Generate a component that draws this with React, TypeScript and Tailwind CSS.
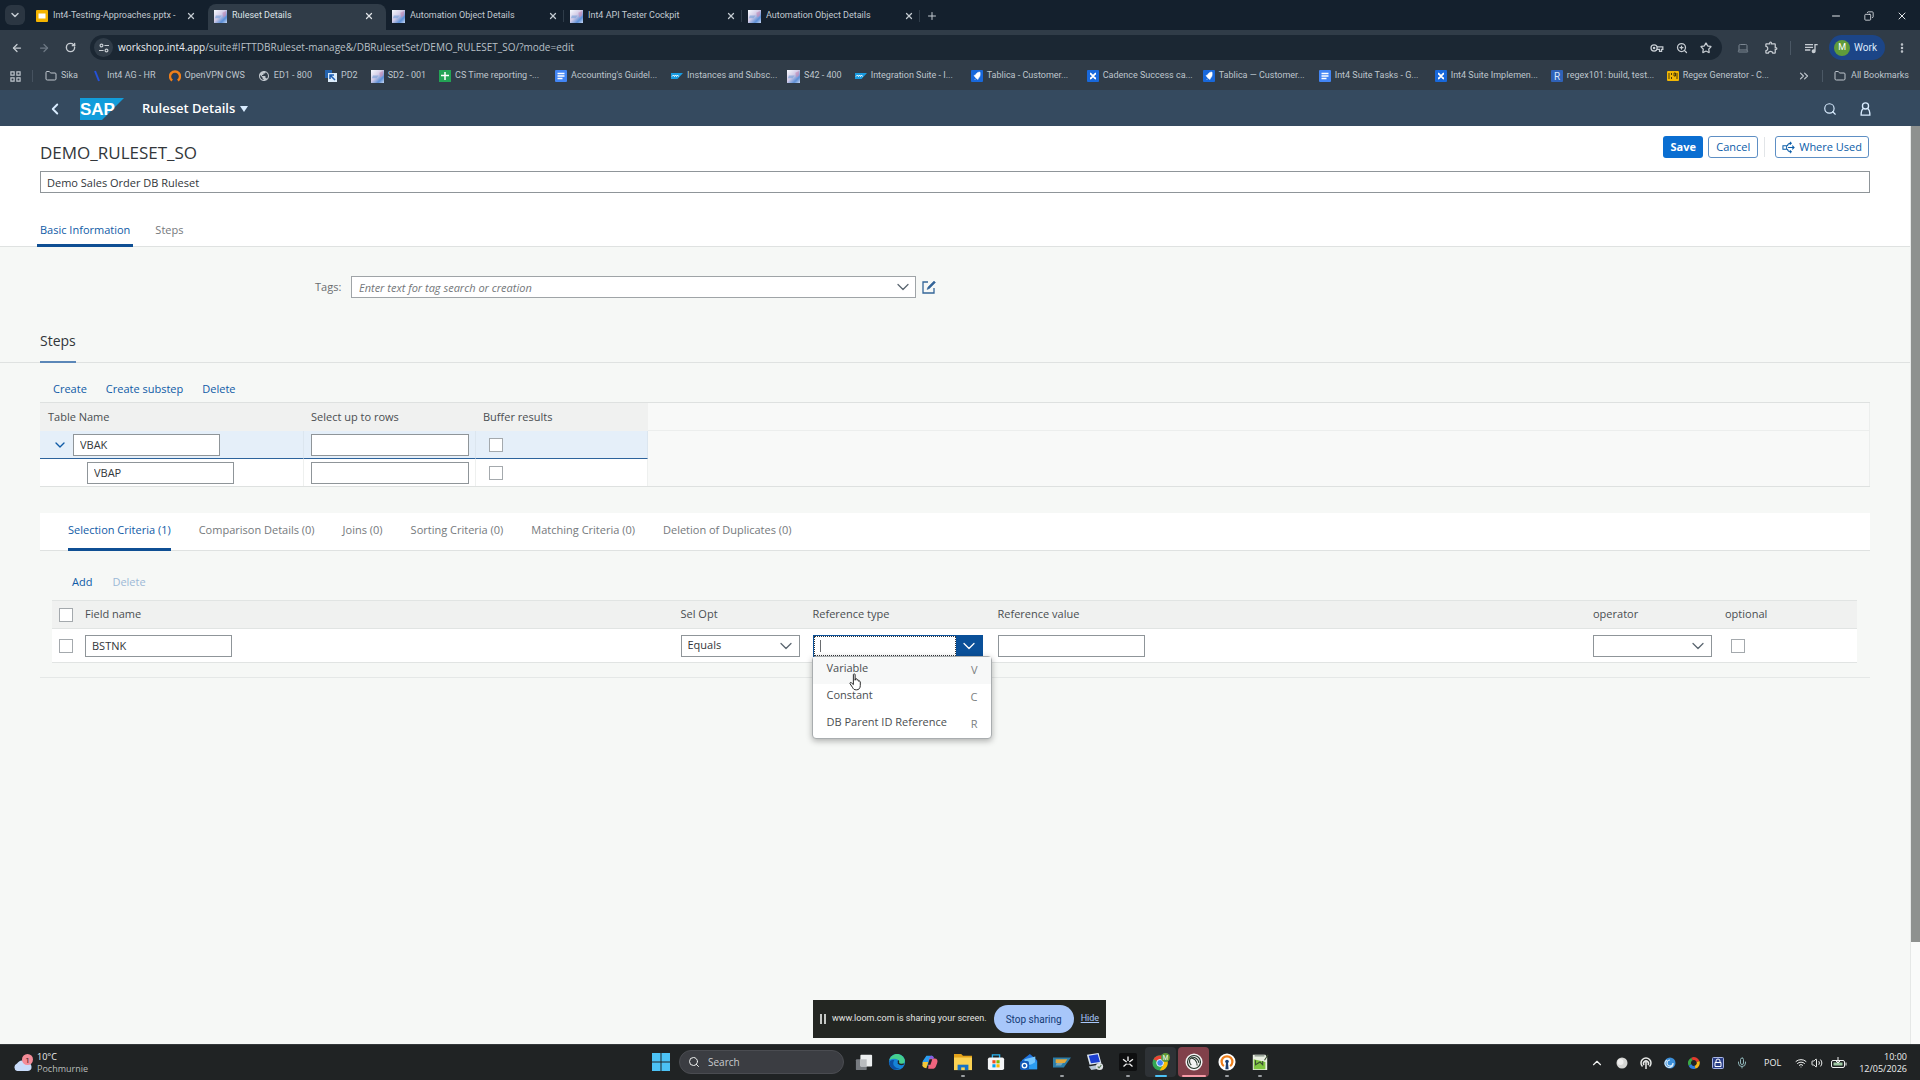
import { useState, type ReactNode } from 'react';
import {
  ArrowLeft,
  ArrowRight,
  ChevronDown,
  ChevronLeft,
  ChevronUp,
  ChevronsRight,
  Copy,
  EllipsisVertical,
  Folder,
  Laptop,
  Mic,
  Minus,
  Plus,
  RotateCw,
  Search,
  Star,
  Volume2,
  Wifi,
  X,
  ZoomIn,
} from 'lucide-react';
import { MdOutlineExtension, MdPublic, MdQueueMusic } from 'react-icons/md';

const INPUT =
  'h-[22px] rounded-none border border-[#8f9599] bg-white px-1.5 text-[11px] text-[#32363a] outline-none';
const CHECKBOX = 'block size-3.5 appearance-none border border-[#a4a9ad] bg-white';

/* ---------- Favicons ---------- */

function Int4Icon() {
  return (
    <svg viewBox="0 0 14 14" className="size-[13px] shrink-0">
      <defs>
        <linearGradient id="int4" x1="0" y1="0" x2="1" y2="1">
          <stop offset="0" stopColor="#f7fbff" />
          <stop offset="0.45" stopColor="#d3cbe6" />
          <stop offset="0.75" stopColor="#5c8fd6" />
          <stop offset="1" stopColor="#c9d8f4" />
        </linearGradient>
      </defs>
      <rect width="14" height="14" fill="url(#int4)" />
      <path d="M2 6h6l-2 3H1z" fill="#7ca3d9" opacity=".7" />
      <path d="M9 3l4-2v5l-3 2z" fill="#c88bb4" opacity=".6" />
    </svg>
  );
}

function SlidesIcon() {
  return (
    <svg viewBox="0 0 12 12" className="size-3 shrink-0">
      <rect width="12" height="12" rx="1" fill="#f5b400" />
      <rect x="2.5" y="3.5" width="7" height="5" fill="#fff" />
    </svg>
  );
}

function SlashIcon() {
  return (
    <svg viewBox="0 0 12 12" className="size-3 shrink-0">
      <path d="M4 1l4 10" stroke="#2451d8" strokeWidth="2" />
    </svg>
  );
}

function VpnIcon() {
  return (
    <svg viewBox="0 0 12 12" className="size-3 shrink-0">
      <path d="M3.2 10.6A5 5 0 1 1 8.8 10.6" fill="none" stroke="#ee7f1b" strokeWidth="2.4" />
      <circle cx="6" cy="6" r="1.5" fill="#1c3f72" />
      <path d="M5.3 6.5h1.4l.6 5H4.7z" fill="#1c3f72" />
    </svg>
  );
}

function Pd2Icon() {
  return (
    <svg viewBox="0 0 12 12" className="size-3 shrink-0">
      <rect x="0" y="0" width="7" height="8" fill="#2463ae" />
      <rect x="3" y="3" width="9" height="9" fill="#dcecfa" />
      <path d="M5 5l5 5M5 9V5h4" stroke="#1d5eb4" strokeWidth="1.5" fill="none" />
    </svg>
  );
}

function SheetsIcon() {
  return (
    <svg viewBox="0 0 12 12" className="size-3 shrink-0">
      <rect width="12" height="12" fill="#23a455" />
      <path d="M6 2v8M2 5.5h8" stroke="#fff" strokeWidth="1.5" />
    </svg>
  );
}

function DocsIcon() {
  return (
    <svg viewBox="0 0 12 12" className="size-3 shrink-0">
      <rect width="12" height="12" rx="1" fill="#4285f4" />
      <path d="M2.5 3.5h7M2.5 6h7M2.5 8.5h5" stroke="#fff" strokeWidth="1.3" />
    </svg>
  );
}

function SapMiniIcon() {
  return (
    <svg viewBox="0 0 12 12" className="size-3 shrink-0">
      <path d="M0 3h12L6.5 9H0z" fill="#1a9be0" />
      <path d="M1 6.5L2.5 5l1 1.5 1-1.5 1 1.5 1-1.5 1 1.5" stroke="#fff" fill="none" />
    </svg>
  );
}

function JiraIcon() {
  return (
    <svg viewBox="0 0 12 12" className="size-3 shrink-0">
      <rect width="12" height="12" rx="1" fill="#1868db" />
      <path d="M9 2C6.5 2 5 3.5 4.5 5L3 5.5 4 7l1.5 1.5L7 9.5 7.5 8C9 7 9.500 5 9 2zM3.500 10L5 8.500" fill="#fff" stroke="#fff" strokeWidth=".5" />
    </svg>
  );
}

function ConfluenceIcon() {
  return (
    <svg viewBox="0 0 12 12" className="size-3 shrink-0">
      <rect width="12" height="12" rx="1" fill="#1868db" />
      <path d="M3 3.5c2 0 3.5 5 6 5M9 3.5c-2 0-3.5 5-6 5" stroke="#fff" strokeWidth="1.8" fill="none" />
    </svg>
  );
}

function RegexIcon() {
  return (
    <svg viewBox="0 0 12 12" className="size-3 shrink-0">
      <rect width="12" height="12" rx="1" fill="#2f62b8" />
      <text x="6" y="9.5" textAnchor="middle" fontSize="10" fill="#dbe8fb" fontFamily="Roboto, sans-serif">R</text>
    </svg>
  );
}

function RegexGenIcon() {
  return (
    <svg viewBox="0 0 12 12" className="size-3 shrink-0">
      <rect y="1" width="12" height="10" rx="1" fill="#f2b705" />
      <path d="M2 3v6M4.5 3v2M4.5 7v2M7 3h1.5v3H7zM10 3v6" stroke="#4a3a08" fill="none" />
    </svg>
  );
}

const browserTabs = [
  { title: 'Int4-Testing-Approaches.pptx -', icon: <SlidesIcon />, active: false },
  { title: 'Ruleset Details', icon: <Int4Icon />, active: true },
  { title: 'Automation Object Details', icon: <Int4Icon />, active: false },
  { title: 'Int4 API Tester Cockpit', icon: <Int4Icon />, active: false },
  { title: 'Automation Object Details', icon: <Int4Icon />, active: false },
];

const bookmarks: { label: string; icon: ReactNode; long?: boolean }[] = [
  { label: 'Sika', icon: <Folder className="size-3 shrink-0" /> },
  { label: 'Int4 AG - HR', icon: <SlashIcon /> },
  { label: 'OpenVPN CWS', icon: <VpnIcon /> },
  { label: 'ED1 - 800', icon: <MdPublic className="size-3 shrink-0" /> },
  { label: 'PD2', icon: <Pd2Icon /> },
  { label: 'SD2 - 001', icon: <Int4Icon /> },
  { label: 'CS Time reporting -...', icon: <SheetsIcon />, long: true },
  { label: "Accounting's Guidel...", icon: <DocsIcon />, long: true },
  { label: 'Instances and Subsc...', icon: <SapMiniIcon />, long: true },
  { label: 'S42 - 400', icon: <Int4Icon /> },
  { label: 'Integration Suite - I...', icon: <SapMiniIcon />, long: true },
  { label: 'Tablica - Customer...', icon: <JiraIcon />, long: true },
  { label: 'Cadence Success ca...', icon: <ConfluenceIcon />, long: true },
  { label: 'Tablica — Customer...', icon: <JiraIcon />, long: true },
  { label: 'Int4 Suite Tasks - G...', icon: <DocsIcon />, long: true },
  { label: 'Int4 Suite Implemen...', icon: <ConfluenceIcon />, long: true },
  { label: 'regex101: build, test...', icon: <RegexIcon />, long: true },
  { label: 'Regex Generator - C...', icon: <RegexGenIcon />, long: true },
];

/* ---------- Browser chrome ---------- */

function TabStrip() {
  return (
    <div className="flex h-[30px] items-end bg-[#14202d] pl-[5px] text-[9px] text-[#c3cad1]">
      <button aria-label="Search tabs" className="mb-[5px] flex size-5 items-center justify-center rounded-md bg-[#2b3642]">
        <ChevronDown className="size-3" strokeWidth={3} />
      </button>
      <div className="ml-[5px] flex">
        {browserTabs.map((tab, i) => (
          <div
            key={i}
            className={`flex h-[26px] w-[178px] items-center gap-[5px] pr-3 pb-0.5 pl-1.5 ${
              tab.active ? 'rounded-t-lg bg-[#303c48] text-[#dfe3e7]' : ''
            }`}
          >
            {tab.icon}
            <span className="flex-1 truncate">{tab.title}</span>
            <button aria-label="Close tab">
              <X className="size-2.5" strokeWidth={3} />
            </button>
            {i > 1 && <span className="-mr-3 h-3 w-px bg-[#2f3c49]" />}
          </div>
        ))}
      </div>
      <button aria-label="New tab" className="mb-2 ml-1.5">
        <Plus className="size-3" />
      </button>
      <div className="mr-3 mb-2 ml-auto flex items-center gap-[22px] text-[#e2e6ea]">
        <button aria-label="Minimize"><Minus className="size-3" /></button>
        <button aria-label="Restore"><Copy className="size-2.5 -scale-x-100" /></button>
        <button aria-label="Close"><X className="size-3" /></button>
      </div>
    </div>
  );
}

function KeyIcon() {
  return (
    <svg viewBox="0 0 16 12" className="h-2.5 w-3.5" fill="none" stroke="currentColor" strokeWidth="1.5">
      <circle cx="4.5" cy="6" r="3.7" />
      <circle cx="4.5" cy="6" r=".8" fill="currentColor" />
      <path d="M8 4.5h7v3h-1.5V10H11V7.5H8" />
    </svg>
  );
}

function TuneIcon() {
  return (
    <svg viewBox="0 0 12 12" className="size-2.5" fill="none" stroke="currentColor" strokeWidth="1.4">
      <circle cx="3" cy="3" r="1.7" />
      <path d="M6.5 3H12M0 9h5.5" />
      <circle cx="9" cy="9" r="1.7" />
    </svg>
  );
}

function AddressBar() {
  return (
    <div className="flex h-[34px] items-center bg-[#303c48] pt-px pr-3 pl-[11px] text-[#c6ccd2]">
      <button aria-label="Back"><ArrowLeft className="size-3" strokeWidth={2.5} /></button>
      <button aria-label="Forward" className="ml-[15px] text-[#6c7783]"><ArrowRight className="size-3" strokeWidth={2.5} /></button>
      <button aria-label="Reload" className="ml-[15px]"><RotateCw className="size-[11px]" strokeWidth={3} /></button>
      <div className="ml-3.5 flex h-[25px] flex-1 items-center rounded-full bg-[#1b2733] pr-2.5 pl-1">
        <span className="flex size-[19px] items-center justify-center rounded-full bg-[#303c48]"><TuneIcon /></span>
        <span className="ml-[5px] flex-1 font-['Open_Sans',sans-serif] text-[10px] text-[#b9c0c7]">
          <span className="text-[#eceff1]">workshop.int4.app</span>
          /suite#IFTTDBRuleset-manage&amp;/DBRulesetSet/DEMO_RULESET_SO/?mode=edit
        </span>
        <span className="flex items-center gap-3">
          <KeyIcon />
          <ZoomIn className="size-3" strokeWidth={2.5} />
          <Star className="size-3" strokeWidth={2.5} />
        </span>
      </div>
      <Laptop className="ml-[15px] size-3 text-[#7b8691]" />
      <MdOutlineExtension className="ml-[15px] size-[15px]" />
      <span className="ml-[11px] h-3.5 w-px bg-[#4b5865]" />
      <MdQueueMusic className="ml-3 size-4" />
      <button className="ml-2.5 flex h-[25px] items-center gap-1 rounded-full bg-[#1c4587] pr-2 pl-[5px] text-[10px] text-[#dfeafd]">
        <span className="flex size-4 items-center justify-center rounded-full bg-[#5f9b3a] text-[9px] text-white">M</span>
        Work
      </button>
      <EllipsisVertical className="ml-[11px] size-3" strokeWidth={3} />
    </div>
  );
}

function BookmarksBar() {
  return (
    <div className="flex h-[26px] items-center bg-[#303c48] pr-[11px] pb-0.5 pl-2.5 text-[9px] text-[#bfc6cd]">
      <svg viewBox="0 0 12 12" className="size-[11px]" fill="none" stroke="currentColor" strokeWidth="1.3">
        <path d="M1 1h3.5v3.5H1zM7.5 1H11v3.5H7.5zM1 7.5h3.5V11H1zM7.5 7.5H11V11H7.5z" />
      </svg>
      <span className="mr-3 ml-[11px] h-3 w-px bg-[#46525f]" />
      <div className="flex gap-[13px]">
        {bookmarks.map((b, i) => (
          <a
            key={i}
            href="#"
            className={`flex items-center gap-1 whitespace-nowrap ${b.long ? 'w-[103px]' : ''}`}
          >
            {b.icon}
            {b.label}
          </a>
        ))}
      </div>
      <ChevronsRight className="ml-auto size-3.5" />
      <span className="mx-[11px] h-3 w-px bg-[#4b5865]" />
      <a href="#" className="flex items-center gap-[5px]">
        <Folder className="size-3" />
        All Bookmarks
      </a>
    </div>
  );
}

/* ---------- SAP shell ---------- */

function ShellHeader() {
  return (
    <header className="flex h-9 items-center bg-[#354a5f] pt-px pr-12 pl-[46px] text-white">
      <button aria-label="Back"><ChevronLeft className="size-[18px] text-[#d9ecff]" strokeWidth={2.5} /></button>
      <svg viewBox="0 0 44 22" className="ml-4 h-[22px] w-11">
        <path d="M0 0h44L22 22H0z" fill="#129ddb" />
        <text x="0" y="17" fontSize="17" fontWeight="700" fill="#fff" fontFamily="'Liberation Sans', sans-serif">SAP</text>
      </svg>
      <button className="ml-[18px] flex items-center gap-[5px] text-[13px] font-semibold">
        Ruleset Details
        <svg viewBox="0 0 8 6" className="h-1.5 w-2"><path d="M0 0h8L4 6z" fill="#d9ecff" /></svg>
      </button>
      <button aria-label="Search" className="ml-auto text-[#d9ecff]"><Search className="size-3.5" /></button>
      <button aria-label="User" className="ml-[22px] text-[#d9ecff]">
        <svg viewBox="0 0 14 16" className="h-3.5 w-[13px]" fill="none" stroke="currentColor" strokeWidth="1.5">
          <circle cx="7" cy="4.5" r="3.5" />
          <path d="M4.5 7.5C2.5 8.5 2 10 2 15h10c0-5-.5-6.5-2.5-7.5" />
        </svg>
      </button>
    </header>
  );
}

function WhereUsedIcon() {
  return (
    <svg viewBox="0 0 14 14" className="size-[13px]" fill="none" stroke="currentColor" strokeWidth="1.1">
      <path d="M1 5h4v4H1zM6.5 7H13M11 5l2 2-2 2M6 5.5c0-2 1.5-3 4-3M8.500 1L10 2.500 8.500 4M6 8.500c0 2 1.500 3 4 3M8.500 10l1.500 1.500L8.500 13" />
    </svg>
  );
}

function ObjectHeader() {
  return (
    <div className="border-b border-[#dfe2e1] bg-white px-10 pt-2.5">
      <div className="flex h-[35px] items-start">
        <h1 className="mt-[5px] text-[17px] leading-6 text-[#32363a]">DEMO_RULESET_SO</h1>
        <div className="mr-px ml-auto flex items-center text-[11px] text-[#0a5ca8]">
          <button className="h-[22px] w-10 rounded-[3px] bg-[#0a6ed1] font-bold text-white">Save</button>
          <button className="ml-[5px] h-[22px] w-[50px] rounded-[3px] border border-[#5e8fc4]">Cancel</button>
          <span className="ml-1.5 h-5 w-px bg-[#e2e5e8]" />
          <button className="ml-2.5 flex h-[22px] items-center gap-1 rounded-[3px] border border-[#5e8fc4] px-1.5">
            <WhereUsedIcon />
            Where Used
          </button>
        </div>
      </div>
      <input aria-label="Description" defaultValue="Demo Sales Order DB Ruleset" className={`${INPUT} block w-full`} />
      <nav className="mt-5 -mb-px -ml-[3px] flex h-[34px] gap-[19px] text-[11px]">
        <a href="#basic" className="border-b-[3px] border-[#0f4f94] px-[3px] pt-[9px] text-[#0f5ba6]">Basic Information</a>
        <a href="#steps" className="px-[3px] pt-[9px] text-[#75797c]">Steps</a>
      </nav>
    </div>
  );
}

function TagsRow() {
  return (
    <div id="basic" className="flex items-center pt-[29px] pl-[315px]">
      <label htmlFor="tags" className="w-9 text-[11px] text-[#6a6d70]">Tags:</label>
      <div className="flex h-[22px] w-[565px] items-center border border-[#9fa4a7] bg-white">
        <input
          id="tags"
          placeholder="Enter text for tag search or creation"
          className="h-full min-w-0 flex-1 px-[7px] text-[11px] outline-none placeholder:text-[#74777a] placeholder:italic"
        />
        <button aria-label="Open tags" className="mr-0.5"><ChevronDown className="size-5 text-[#5a6670]" strokeWidth={1.5} /></button>
      </div>
      <button aria-label="Edit tags" className="ml-1.5 text-[#346598]">
        <svg viewBox="0 0 14 14" className="size-3.5" fill="none" stroke="currentColor" strokeWidth="1.3">
          <path d="M6 2H1v11h11V8" />
          <path d="M5 9.5L6 7l6-6 1.5 1.5-6 6z" fill="currentColor" strokeWidth=".5" />
        </svg>
      </button>
    </div>
  );
}

const steps = [
  { name: 'VBAK', level: 0 },
  { name: 'VBAP', level: 1 },
];

function StepsTable() {
  return (
    <div className="flex border-y border-[#dee1e0]">
      <table className="w-[608px] table-fixed border-separate border-spacing-0 text-left text-[11px]">
        <colgroup>
          <col className="w-[264px]" />
          <col className="w-[172px]" />
          <col />
        </colgroup>
        <thead>
          <tr className="h-7 bg-[#f0f1f0] text-[#4a4e51]">
            <th className="p-0 pl-2 font-normal">Table Name</th>
            <th className="p-0 pl-[7px] font-normal">Select up to rows</th>
            <th className="p-0 pl-[7px] font-normal">Buffer results</th>
          </tr>
        </thead>
        <tbody>
          {steps.map((step) => {
            const selected = step.level === 0;
            const cell = selected
              ? 'h-7 border-r border-b border-r-[#dce6ef] border-b-[#2d639c] bg-[#e5eff9] p-0'
              : 'h-[27px] border-r border-[#eef0ef] bg-white p-0';
            return (
              <tr key={step.name}>
                <td className={cell}>
                  <div className={`flex items-center ${selected ? 'pl-3' : 'pl-[47px]'}`}>
                    {selected && (
                      <button aria-label="Collapse VBAK" className="mr-[5px]">
                        <ChevronDown className="size-4 text-[#0f5ba6]" />
                      </button>
                    )}
                    <input aria-label="Table name" defaultValue={step.name} className={`${INPUT} w-[147px]`} />
                  </div>
                </td>
                <td className={cell}>
                  <input aria-label="Select up to rows" className={`${INPUT} ml-[7px] block w-[158px]`} />
                </td>
                <td className={cell}>
                  <input type="checkbox" aria-label="Buffer results" className={`${CHECKBOX} ml-[13px]`} />
                </td>
              </tr>
            );
          })}
        </tbody>
      </table>
      <div className="flex-1 border-r border-[#eceeed] bg-[#f8f9f8]">
        <div className="h-7 border-b border-[#eceeed]" />
      </div>
    </div>
  );
}

const detailTabs = [
  'Selection Criteria (1)',
  'Comparison Details (0)',
  'Joins (0)',
  'Sorting Criteria (0)',
  'Matching Criteria (0)',
  'Deletion of Duplicates (0)',
];

const referenceTypes = [
  { key: 'V', label: 'Variable' },
  { key: 'C', label: 'Constant' },
  { key: 'R', label: 'DB Parent ID Reference' },
];

function HandCursor() {
  return (
    <svg viewBox="0 0 16 20" className="pointer-events-none absolute top-4 left-9 h-[18px] w-3.5">
      <path
        d="M5 1.5c0-1 2-1 2 0V8l.3-1.5c.5-.7 1.8-.4 1.900.5V8c.5-.8 1.8-.5 1.900.4v.8c.6-.6 1.8-.2 1.8.8V14c0 3-1.500 5-4.500 5-2.500 0-3.500-1-4.500-3L1.200 12c-.6-1.200.8-2 1.700-1L5 13z"
        fill="#fff"
        stroke="#222"
        strokeWidth="1.1"
      />
    </svg>
  );
}

function ReferenceTypeCombo() {
  const [value, setValue] = useState('');
  const [open, setOpen] = useState(true);

  return (
    <div className="relative w-[170px]">
      <div className="flex h-[22px] border border-[#0a5099]">
        <div className="flex flex-1 items-center border border-dotted border-[#32363a] bg-white pl-[5px]">
          <span className="h-3 w-px bg-[#6a6d70]" />
          <input
            aria-label="Reference type"
            value={value}
            onChange={(e) => setValue(e.target.value)}
            className="h-full w-full min-w-0 text-[11px] outline-none"
          />
        </div>
        <button
          aria-label="Show reference types"
          onClick={() => setOpen(!open)}
          className="flex w-[26px] items-center justify-center bg-[#0a5099]"
        >
          <ChevronDown className="size-5 text-white" strokeWidth={1.5} />
        </button>
      </div>
      {open && (
        <ul
          role="listbox"
          className="absolute top-[21px] -left-px z-10 w-[180px] rounded-sm border border-[#a9adaf] bg-white shadow-[0_2px_6px_rgba(0,0,0,0.3)]"
        >
          {referenceTypes.map((t, i) => (
            <li
              key={t.key}
              role="option"
              aria-selected={i === 0}
              onClick={() => {
                setValue(t.label);
                setOpen(false);
              }}
              className={`flex h-[27px] items-center justify-between pr-[13px] pl-3.5 text-[#4a4e51] ${i === 0 ? 'bg-[#f7f8f8]' : ''}`}
            >
              <span className="pb-1">{t.label}</span>
              <span className="text-[#7b7f82]">{t.key}</span>
            </li>
          ))}
          <HandCursor />
        </ul>
      )}
    </div>
  );
}

function SelectBox({ label, options }: { label: string; options: string[] }) {
  return (
    <div className="relative w-[119px]">
      <select aria-label={label} className={`${INPUT} block w-full appearance-none`}>
        {options.map((o) => (
          <option key={o}>{o}</option>
        ))}
      </select>
      <ChevronDown className="pointer-events-none absolute top-px right-1 size-5 text-[#5a6670]" strokeWidth={1.5} />
    </div>
  );
}

function CriteriaTable() {
  const td = 'border-b border-[#e1e4e3] bg-white p-0';
  const th = 'border-y border-[#e1e4e3] p-0 font-normal';
  return (
    <table className="w-full table-fixed border-separate border-spacing-0 text-left text-[11px]">
      <colgroup>
        <col className="w-[33px]" />
        <col />
        <col className="w-[132px]" />
        <col className="w-[185px]" />
        <col />
        <col className="w-[132px]" />
        <col className="w-[132px]" />
      </colgroup>
      <thead>
        <tr className="h-[29px] bg-[#f0f1f0] text-[#4a4e51]">
          <th className={`${th} pl-[7px]`}><input type="checkbox" aria-label="Select all" className={CHECKBOX} /></th>
          <th className={th}>Field name</th>
          <th className={th}>Sel Opt</th>
          <th className={th}>Reference type</th>
          <th className={th}>Reference value</th>
          <th className={th}>operator</th>
          <th className={th}>optional</th>
        </tr>
      </thead>
      <tbody>
        <tr className="h-[34px]">
          <td className={`${td} pl-[7px]`}><input type="checkbox" aria-label="Select row" className={CHECKBOX} /></td>
          <td className={td}><input aria-label="Field name" defaultValue="BSTNK" className={`${INPUT} block w-[147px]`} /></td>
          <td className={td}><SelectBox label="Sel Opt" options={['Equals', 'Between']} /></td>
          <td className={td}><ReferenceTypeCombo /></td>
          <td className={td}><input aria-label="Reference value" className={`${INPUT} block w-[147px]`} /></td>
          <td className={td}><SelectBox label="operator" options={['', 'AND', 'OR']} /></td>
          <td className={td}><input type="checkbox" aria-label="optional" className={`${CHECKBOX} ml-1.5`} /></td>
        </tr>
      </tbody>
    </table>
  );
}

function RulesetPage() {
  return (
    <main className="min-w-0 flex-1 bg-[#f6f8f6]">
      <ObjectHeader />
      <TagsRow />
      <section id="steps">
        <div className="mt-[33px] flex border-b border-[#dfe2e1] pl-10">
          <h2 className="-mb-px border-b-2 border-[#5b87b8] pb-2.5 text-[14px] leading-5 text-[#32363a]">Steps</h2>
        </div>
        <div className="px-10">
          <div className="flex h-[39px] items-end gap-[19px] pb-[5px] pl-[13px] text-[11px] leading-4 text-[#0f5ba6]">
            <button>Create</button>
            <button>Create substep</button>
            <button>Delete</button>
          </div>
          <StepsTable />
          <div className="mt-[26px] flex h-[38px] gap-7 border-b border-[#dfe2e1] bg-white pl-7 text-[11px] text-[#75797c]">
            {detailTabs.map((tab, i) => (
              <button
                key={tab}
                className={`-mb-px border-b-[3px] ${i === 0 ? 'border-[#0f4f94] text-[#0f5ba6]' : 'border-transparent'}`}
              >
                {tab}
              </button>
            ))}
          </div>
          <div className="border-b border-[#e5e8e7] pr-[13px] pb-3.5 pl-3">
            <div className="flex h-[49px] items-end gap-5 pb-2.5 pl-5 text-[11px] leading-4">
              <button className="text-[#0f5ba6]">Add</button>
              <button disabled className="text-[#9cb8d6]">Delete</button>
            </div>
            <CriteriaTable />
          </div>
        </div>
      </section>
    </main>
  );
}

function SharingBar() {
  return (
    <div className="absolute bottom-[42px] left-[813px] flex h-[38px] items-center bg-[#232622] px-[7px] font-['Roboto',sans-serif] text-[9px] text-[#e3e5e3]">
      <span className="flex gap-0.5">
        <span className="h-2.5 w-0.5 bg-[#c5c8c5]" />
        <span className="h-2.5 w-0.5 bg-[#c5c8c5]" />
      </span>
      <span className="ml-1.5">www.loom.com is sharing your screen.</span>
      <button className="ml-[7px] h-7 w-20 rounded-full bg-[#a8c7fa] text-[10px] text-[#123a75]">Stop sharing</button>
      <a href="#" className="ml-[7px] text-[#a8c7fa] underline">Hide</a>
    </div>
  );
}

/* ---------- Windows taskbar ---------- */

const apps: { name: string; state?: 'open' | 'active' | 'alert'; icon: ReactNode }[] = [
  {
    name: 'Task view',
    icon: (
      <>
        <rect x="1" y="7" width="12" height="12" rx="1" fill="#777b80" />
        <rect x="6" y="2" width="13" height="13" rx="1" fill="#eceeef" />
        <rect x="6" y="7" width="7" height="8" fill="#b9bcbf" />
      </>
    ),
  },
  {
    name: 'Edge',
    icon: (
      <>
        <circle cx="10" cy="10" r="9" fill="#1683d8" />
        <path d="M1.5 8C3 2 10-1 15.5 3c4 3 4.5 8.5 0 9.5-3 .6-5-1-3.5-3 .5-3-6-4.5-10.5-1.5z" fill="#45cf8e" />
        <path d="M7 8c-3 4 0 9 6 9-6 4-12-1-11.5-7C3 8 5 7.5 7 8z" fill="#0c4fa3" />
        <path d="M11 8.5c1.5 1 .5 2 .5 3 2 2 5 1 6 .5" fill="none" stroke="#202324" strokeWidth="1.5" />
      </>
    ),
  },
  {
    name: 'Copilot',
    icon: (
      <>
        <path d="M6 3h6c2 0 2 2 1.5 3.5L11 14H5c-3 0-4-2-3-5z" fill="#2b9df0" />
        <path d="M9 6h6c3 0 4 2 3 5l-1.5 4c-.7 2-2 2.5-4 2.5H8z" fill="#f0647e" />
        <path d="M2 10h6l-2 7c-2 0-4-1-4.5-3z" fill="#f3c637" />
        <path d="M11 3c3 0 3 3 4.5 3H9z" fill="#8e57e0" />
        <path d="M9.5 7h3l-2 6h-3z" fill="#202324" />
      </>
    ),
  },
  {
    name: 'Explorer',
    state: 'open',
    icon: (
      <>
        <path d="M0 1h8l2 2h10v16H0z" fill="#e3a21a" />
        <path d="M0 5h20v14H0z" fill="#fbd253" />
        <path d="M4 13h12v6H4z" fill="#1672c4" />
        <path d="M8 16h4v3H8z" fill="#fbd253" />
      </>
    ),
  },
  {
    name: 'Store',
    icon: (
      <>
        <path d="M6 6V2h8v4" stroke="#27b3f0" strokeWidth="1.5" fill="none" />
        <rect x="1" y="5" width="18" height="14" rx="2" fill="#f4f5f7" />
        <rect x="6" y="8" width="3.5" height="3.5" fill="#f25022" />
        <rect x="10.5" y="8" width="3.5" height="3.5" fill="#7fba00" />
        <rect x="6" y="12.5" width="3.5" height="3.5" fill="#00a4ef" />
        <rect x="10.5" y="12.5" width="3.5" height="3.5" fill="#ffb900" />
      </>
    ),
  },
  {
    name: 'Outlook',
    icon: (
      <>
        <path d="M2 8l9-7 8 7v10H4z" fill="#1f73dd" />
        <path d="M5 7l12-3v9H5z" fill="#73c6ff" />
        <path d="M4 18l15-9v9z" fill="#2b9cf2" />
        <rect x="0" y="9" width="10" height="10" rx="2" fill="#1459b8" />
        <circle cx="5" cy="14" r="2.5" fill="none" stroke="#fff" strokeWidth="1.5" />
      </>
    ),
  },
  {
    name: 'SAP Logon',
    state: 'open',
    icon: (
      <>
        <path d="M0 5h20l-8 11H0z" fill="#2c7da8" />
        <path d="M3 7h13l-3 4H3z" fill="#e1a73c" />
        <path d="M4 11h7l-2 3H3z" fill="#7ba7b8" />
      </>
    ),
  },
  {
    name: 'Remote Desktop',
    icon: (
      <>
        <path d="M1 2l13-2 3 11-13 2z" fill="#dce6f2" />
        <path d="M3 3l10-1.500L15.500 10l-10 1.500z" fill="#1c3fd0" />
        <path d="M3 15l11-2 3 4-11 2z" fill="#b9c7d6" />
        <circle cx="15" cy="15" r="4" fill="#dfe3e6" />
        <path d="M13 15l1.5 1.5 2.5-3" stroke="#5b7c5b" strokeWidth="1.2" fill="none" />
      </>
    ),
  },
  {
    name: 'Shortcuts',
    state: 'open',
    icon: (
      <>
        <rect width="20" height="20" rx="2" fill="#0e0f10" />
        <path d="M10 4v5M4.5 7l4 3M15.5 7l-4 3M5 15l3.5-3M15 15l-3.5-3M10 12v1" stroke="#f2f2f2" strokeWidth="1.5" />
      </>
    ),
  },
  {
    name: 'Chrome',
    state: 'active',
    icon: (
      <>
        <circle cx="9" cy="11" r="8.5" fill="#34a853" />
        <path d="M1.6 7A8.5 8.5 0 0 1 16.4 7H9a4 4 0 0 0-3.5 2z" fill="#ea4335" />
        <path d="M16.4 7A8.5 8.5 0 0 1 8.5 19.5L12.5 13A4 4 0 0 0 9 7z" fill="#fbbc05" />
        <circle cx="9" cy="11" r="3.8" fill="#4285f4" stroke="#fff" />
        <circle cx="15" cy="5" r="5" fill="#5f9b3a" />
        <text x="15" y="7.5" textAnchor="middle" fontSize="7" fill="#fff" fontFamily="Roboto, sans-serif">M</text>
      </>
    ),
  },
  {
    name: 'Loom',
    state: 'alert',
    icon: (
      <>
        <circle cx="10" cy="10" r="9.5" fill="#f4f4f4" />
        <circle cx="10" cy="10" r="7.2" fill="none" stroke="#25352a" strokeWidth="1.3" />
        <path d="M6 5.500c4 0 7.500 3 7.500 8.500M6 5.500c-1.500 3-1 6 1 8M7 5c4-1 8 2 8.500 6" stroke="#25352a" strokeWidth="1.200" fill="none" />
      </>
    ),
  },
  {
    name: 'OpenVPN',
    state: 'open',
    icon: (
      <>
        <circle cx="10" cy="10" r="9.5" fill="#fff" />
        <path d="M6.5 14.5a6 6 0 1 1 7 0" fill="none" stroke="#ee7f1b" strokeWidth="2.5" />
        <circle cx="10" cy="9.5" r="2" fill="#1c3f72" />
        <path d="M9 10h2l.8 8H8.2z" fill="#1c3f72" />
      </>
    ),
  },
  {
    name: 'Notepad++',
    state: 'open',
    icon: (
      <>
        <path d="M2 2h14l2 3v14H2z" fill="#e9efe2" />
        <path d="M3 7l13 3v8H3z" fill="#7fc641" />
        <path d="M4 2h11v2H4z" fill="#9aa59a" />
        <path d="M5 8v5l5-3 3 3V9M15 8l4-6" stroke="#3c4f33" strokeWidth="1.2" fill="none" />
      </>
    ),
  },
];

function Taskbar() {
  return (
    <footer className="grid h-9 grid-cols-[1fr_auto_1fr] items-center border-t border-[#34383a] bg-[#202324] font-['Open_Sans',sans-serif] text-[9px] text-[#eef0ef]">
      <button className="flex items-center gap-1 pl-[13px] text-left leading-3">
        <svg viewBox="0 0 20 18" className="h-[18px] w-5">
          <path d="M4 17a4 4 0 0 1 0-7.5A6 6 0 0 1 14 9a4 4 0 0 1 1 8z" fill="#c9dcfa" />
          <circle cx="14.5" cy="5.5" r="5.5" fill="#f48c98" />
          <text x="14.5" y="8.5" textAnchor="middle" fontSize="8" fill="#30181b" fontFamily="Roboto, sans-serif">1</text>
        </svg>
        <span>
          10°C<br />
          <span className="text-[#b9bdbb]">Pochmurnie</span>
        </span>
      </button>
      <div className="flex items-center pb-px pl-2">
        <button aria-label="Start">
          <svg viewBox="0 0 18 18" className="size-[18px]" fill="#4cc2f5">
            <path d="M0 0h8.5v8.5H0zM9.5 0H18v8.5H9.5zM0 9.5h8.5V18H0zM9.5 9.5H18V18H9.5z" />
          </svg>
        </button>
        <label className="ml-[9px] flex h-6 w-[165px] items-center gap-2 rounded-full border border-[#4a4c51] bg-[#3b3d42] pl-2">
          <Search className="size-3" />
          <input aria-label="Search" placeholder="Search" className="w-24 text-[10px] outline-none placeholder:text-[#c9cbce]" />
        </label>
        <div className="ml-[3px] flex">
          {apps.map((app) => (
            <button
              key={app.name}
              aria-label={app.name}
              className={`mx-px flex h-[30px] w-[31px] flex-col items-center rounded-sm pt-1.5 ${
                app.state === 'alert' ? 'bg-[#81404a]' : app.state === 'active' ? 'bg-[#2e3236]' : ''
              }`}
            >
              <svg viewBox="0 0 20 20" className="size-[18px]">{app.icon}</svg>
              {app.state === 'open' && <span className="mt-1 h-0.5 w-1 rounded-full bg-[#9a9ea1]" />}
              {app.state === 'active' && <span className="mt-1 h-0.5 w-3 rounded-full bg-[#4cc2f5]" />}
              {app.state === 'alert' && <span className="mt-1 h-0.5 w-6 rounded-full bg-[#f79aa6]" />}
            </button>
          ))}
        </div>
      </div>
      <div className="flex items-center justify-end pr-[13px]">
        <div className="flex items-center gap-3">
          <ChevronUp className="size-3.5" />
          <svg viewBox="0 0 12 12" className="size-3"><circle cx="6" cy="6" r="5.5" fill="#d5d6d4" /><circle cx="4.5" cy="5" r="3" fill="#efefee" /></svg>
          <svg viewBox="0 0 12 12" className="size-3" fill="none" stroke="#e8eae8" strokeWidth="1.5">
            <path d="M2.5 9.5a5 5 0 1 1 7 0M6 5v7M4 8a2.5 2.5 0 1 1 4 0" />
          </svg>
          <svg viewBox="0 0 12 12" className="size-3">
            <circle cx="6" cy="6" r="5.5" fill="#3b8ed8" />
            <path d="M3 3a4 4 0 1 0 6 3 3 3 0 1 1-3-3" fill="none" stroke="#d4e8f8" strokeWidth="1.2" />
          </svg>
          <svg viewBox="0 0 12 12" className="size-3" fill="none" strokeWidth="3">
            <path d="M2 8a4.3 4.3 0 0 1 2-6" stroke="#3aa845" />
            <path d="M4 2a4.3 4.3 0 0 1 6 2.5" stroke="#e23b2e" />
            <path d="M10 4.5A4.3 4.3 0 0 1 7 10.2" stroke="#f3b71b" />
            <path d="M7 10.2A4.3 4.3 0 0 1 2 8" stroke="#2d7fe0" />
          </svg>
          <svg viewBox="0 0 12 12" className="size-3">
            <rect x=".5" y=".5" width="11" height="11" rx="1" fill="#2b3f86" stroke="#a9b6e6" />
            <path d="M4 5.500V4a2 2 0 0 1 4 0v1.500M3 5.500h6v4H3z" fill="none" stroke="#fff" />
          </svg>
          <Mic className="size-3 text-[#8fb5b8]" />
        </div>
        <span className="ml-4">POL</span>
        <Wifi className="ml-3.5 size-3" />
        <Volume2 className="ml-1 size-3" />
        <svg viewBox="0 0 16 12" className="ml-2 h-3 w-4" fill="none" stroke="currentColor">
          <rect x=".5" y="3.5" width="13" height="7" rx="1.5" />
          <path d="M15 5.5v3" />
          <path d="M2.5 5.5h9v3h-9z" fill="#9fc9a4" stroke="none" />
          <path d="M7 0v6M5 4l2 2 2-2" />
        </svg>
        <span className="ml-3 text-right leading-3">
          10:00<br />12/05/2026
        </span>
      </div>
    </footer>
  );
}

export default function App() {
  return (
    <div className="relative flex min-h-screen flex-col bg-[#f6f8f6] font-['Open_Sans',sans-serif]">
      <div className="font-['Roboto',sans-serif]">
        <TabStrip />
        <AddressBar />
        <BookmarksBar />
      </div>
      <ShellHeader />
      <div className="flex flex-1">
        <RulesetPage />
        <div className="flex w-2.5 flex-col border-l border-[#e6e8e7] bg-[#fafbfa]">
          <div className="h-8/9 bg-[#8e918f]" />
        </div>
      </div>
      <SharingBar />
      <Taskbar />
    </div>
  );
}
